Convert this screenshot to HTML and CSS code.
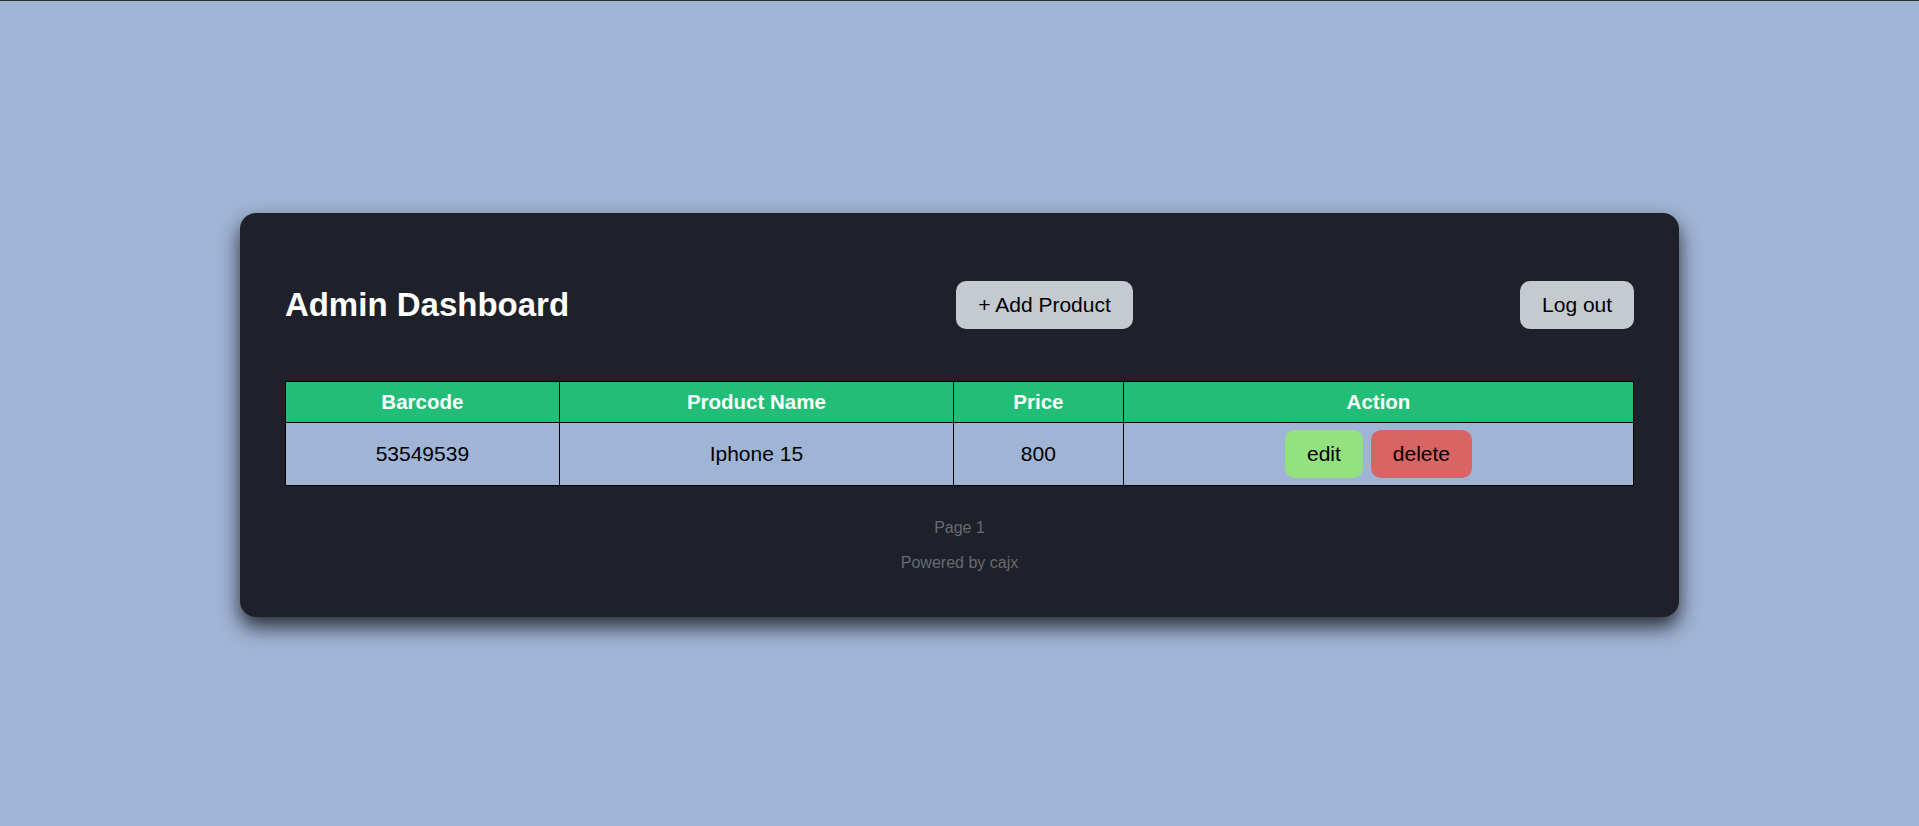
FILE: index.html
```html
<!DOCTYPE html>
<html lang="en">
<head>
<meta charset="utf-8">
<title>Admin Dashboard</title>
<link rel="stylesheet" href="styles.css">
</head>
<body>
<main class="card">
  <header class="header">
    <h1 class="title">Admin Dashboard</h1>
    <button class="btn btn-gray">+ Add Product</button>
    <button class="btn btn-gray">Log out</button>
  </header>
  <table class="products">
    <thead>
      <tr>
        <th class="col-barcode">Barcode</th>
        <th class="col-name">Product Name</th>
        <th class="col-price">Price</th>
        <th class="col-action">Action</th>
      </tr>
    </thead>
    <tbody>
      <tr>
        <td>53549539</td>
        <td>Iphone 15</td>
        <td>800</td>
        <td>
          <div class="actions">
            <button class="btn btn-edit">edit</button>
            <button class="btn btn-delete">delete</button>
          </div>
        </td>
      </tr>
    </tbody>
  </table>
  <footer class="footer">
    <p class="footer-line">Page 1</p>
    <p class="footer-line">Powered by cajx</p>
  </footer>
</main>
</body>
</html>
```
FILE: styles.css
```css
* { box-sizing: border-box; }
html, body { margin: 0; padding: 0; }
body {
  min-height: 100vh;
  background: #a0b4d5;
  border-top: 1px solid #2e2f31;
  padding-top: 3px;
  display: flex;
  align-items: center;
  justify-content: center;
  font-family: "Liberation Sans", Arial, sans-serif;
}
.card {
  width: 75%;
  background: #1e2129;
  border-radius: 16px;
  padding: 45px;
  box-shadow: 0 10px 20px rgba(0, 0, 0, 0.75);
}
.header {
  display: flex;
  justify-content: space-between;
  align-items: center;
  padding: 22.5px 0;
}
.title {
  margin: 0;
  color: #ffffff;
  font-size: 33px;
  font-weight: bold;
}
.btn {
  font-family: "Liberation Sans", Arial, sans-serif;
  font-size: 21px;
  line-height: 24px;
  padding: 12px 22px;
  border: none;
  border-radius: 10px;
  color: #000;
  cursor: pointer;
}
.btn-gray { background: #c5c9d0; }
.btn-edit { background: #94e17f; }
.btn-delete { background: #d86464; }
.products {
  width: 100%;
  margin-top: 30px;
  border-collapse: collapse;
  font-size: 21px;
}
.products th,
.products td {
  border: 1px solid #000;
  text-align: center;
  padding: 7px 8px;
}
.products th {
  background: #22bd77;
  color: #fff;
  font-size: 20.5px;
  font-weight: bold;
  padding: 8px;
}
.products td {
  background: #a0b4d5;
  color: #000;
}
.col-barcode { width: 274px; }
.col-name { width: 394px; }
.col-price { width: 170px; }
.actions {
  display: flex;
  justify-content: center;
  gap: 8px;
}
.footer {
  margin-top: 32px;
  display: flex;
  flex-direction: column;
  align-items: center;
  gap: 16px;
}
.footer-line {
  margin: 0;
  font-size: 16px;
  line-height: 19px;
  color: #676b72;
}
```
